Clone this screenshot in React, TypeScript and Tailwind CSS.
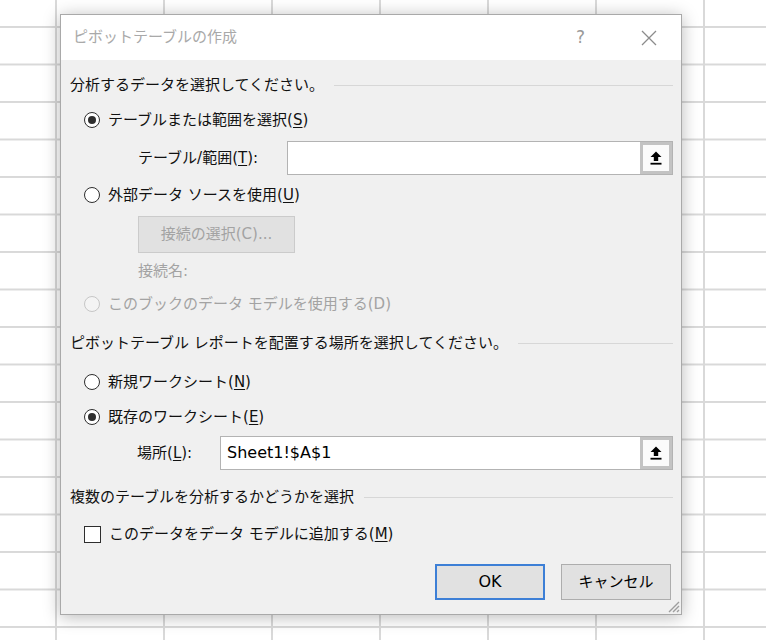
import React from "react";

const font = "font-['DejaVu_Sans','Noto_Sans_CJK_JP',sans-serif]";

const Radio = ({ checked, disabled }: { checked?: boolean; disabled?: boolean }) => (
  <span
    className={`flex h-4 w-4 shrink-0 items-center justify-center rounded-full border-[1.5px] ${
      disabled ? "border-[#c6c6c6] bg-[#f4f4f4]" : "border-[#2e2e2e] bg-white"
    }`}
  >
    {checked && <span className="h-2 w-2 rounded-full bg-[#2e2e2e]" />}
  </span>
);

const Key = ({ k }: { k: string }) => (
  <>
    (<span className="underline underline-offset-2">{k}</span>)
  </>
);

const Header = ({ text, mt }: { text: string; mt: string }) => (
  <div className={`flex h-6 items-center ${mt}`}>
    <span className="whitespace-nowrap">{text}</span>
    <span className="ml-[10px] h-px flex-1 bg-[#d7d7d7]" />
  </div>
);

const PickIcon = () => (
  <svg width="12" height="14" viewBox="0 0 12 14">
    <path d="M6 0.5 L11.5 6 H8.2 V10 H3.8 V6 H0.5 Z" fill="#000" />
    <rect x="0.5" y="11.8" width="11" height="1.8" fill="#000" />
  </svg>
);

const RangeInput = ({ value, width }: { value?: string; width: string }) => (
  <div className={`flex h-[34px] ${width} items-stretch border border-[#b3b3b3] bg-white`}>
    <span className="flex flex-1 items-center px-[6px] text-[16px] text-black">{value}</span>
    <span className="flex w-[32px] bg-[#c3c3c3] p-[3px]">
      <span className="flex flex-1 items-center justify-center bg-[#fbfbfb]">
        <PickIcon />
      </span>
    </span>
  </div>
);

export default function App() {
  return (
    <div
      className={`h-[640px] w-[766px] overflow-hidden bg-white bg-[linear-gradient(to_right,#d9d9d9_2px,transparent_2px),linear-gradient(to_bottom,#d9d9d9_2px,transparent_2px)] bg-[length:108px_37.5px] bg-[position:55px_26px] pt-[14px] pl-[60px] ${font} text-[15px] leading-none text-[#111111]`}
    >
      <div className="relative flex h-[601px] w-[622px] flex-col border border-[#a9a9a9] bg-[#f0f0f0] shadow-[0_2px_16px_rgba(0,0,0,0.28)]">
        {/* title bar */}
        <div className="flex h-[45px] items-center bg-white pl-[12px] pr-[24px]">
          <span className="text-[15px] text-[#a9a9a9]">ピボットテーブルの作成</span>
          <span className="ml-auto mr-[56px] text-[17px] text-[#9a9a9a]">?</span>
          <svg width="16" height="16" viewBox="0 0 16 16">
            <path d="M1 1 L15 15 M15 1 L1 15" stroke="#8c8c8c" strokeWidth="1.3" />
          </svg>
        </div>

        {/* body */}
        <div className="flex flex-col pl-[9px] pr-[8px]">
          <Header text="分析するデータを選択してください。" mt="mt-[13px]" />

          <div className="mt-[11px] ml-[14px] flex h-6 items-center gap-[8px]">
            <Radio checked />
            <span>
              テーブルまたは範囲を選択<Key k="S" />
            </span>
          </div>

          <div className="mt-[9px] flex items-center pl-[68px]">
            <span>
              テーブル/範囲<Key k="T" />:
            </span>
            <div className="ml-auto">
              <RangeInput width="w-[386px]" />
            </div>
          </div>

          <div className="mt-[8px] ml-[14px] flex h-6 items-center gap-[8px]">
            <Radio />
            <span>
              外部データ ソースを使用<Key k="U" />
            </span>
          </div>

          <div className="mt-[9px] pl-[68px]">
            <div className="flex h-[37px] w-[157px] items-center justify-center border border-[#cbcbcb] bg-[#e1e1e1] text-[#a3a3a3]">
              接続の選択(C)...
            </div>
          </div>

          <div className="mt-[6px] flex h-6 items-center pl-[68px] text-[#a3a3a3]">接続名:</div>

          <div className="mt-[9px] ml-[14px] flex h-6 items-center gap-[8px] text-[#a3a3a3]">
            <Radio disabled />
            <span>このブックのデータ モデルを使用する(D)</span>
          </div>

          <Header text="ピボットテーブル レポートを配置する場所を選択してください。" mt="mt-[15px]" />

          <div className="mt-[15px] ml-[14px] flex h-6 items-center gap-[8px]">
            <Radio />
            <span>
              新規ワークシート<Key k="N" />
            </span>
          </div>

          <div className="mt-[11px] ml-[14px] flex h-6 items-center gap-[8px]">
            <Radio checked />
            <span>
              既存のワークシート<Key k="E" />
            </span>
          </div>

          <div className="mt-[7px] flex items-center pl-[67px]">
            <span>
              場所<Key k="L" />:
            </span>
            <div className="ml-auto">
              <RangeInput width="w-[453px]" value="Sheet1!$A$1" />
            </div>
          </div>

          <Header text="複数のテーブルを分析するかどうかを選択" mt="mt-[15px]" />

          <div className="mt-[13px] ml-[14px] flex h-6 items-center gap-[8px]">
            <span className="h-[17px] w-[17px] shrink-0 border-[1.5px] border-[#2e2e2e] bg-white" />
            <span>
              このデータをデータ モデルに追加する<Key k="M" />
            </span>
          </div>

          <div className="mt-[18px] flex justify-end gap-[16px] pr-[2px]">
            <button className="flex h-[36px] w-[110px] items-center justify-center border-2 border-[#3d7fd6] bg-[#e1e1e1] text-[16px] text-black">
              OK
            </button>
            <button className="flex h-[36px] w-[110px] items-center justify-center border border-[#adadad] bg-[#e1e1e1] text-black">
              キャンセル
            </button>
          </div>
        </div>

        {/* resize grip */}
        <svg className="absolute right-[1px] bottom-[1px]" width="13" height="13" viewBox="0 0 13 13">
          <path d="M12 2 L2 12 M12 6 L6 12 M12 10 L10 12" stroke="#9e9e9e" strokeWidth="1.4" />
        </svg>
      </div>
    </div>
  );
}
